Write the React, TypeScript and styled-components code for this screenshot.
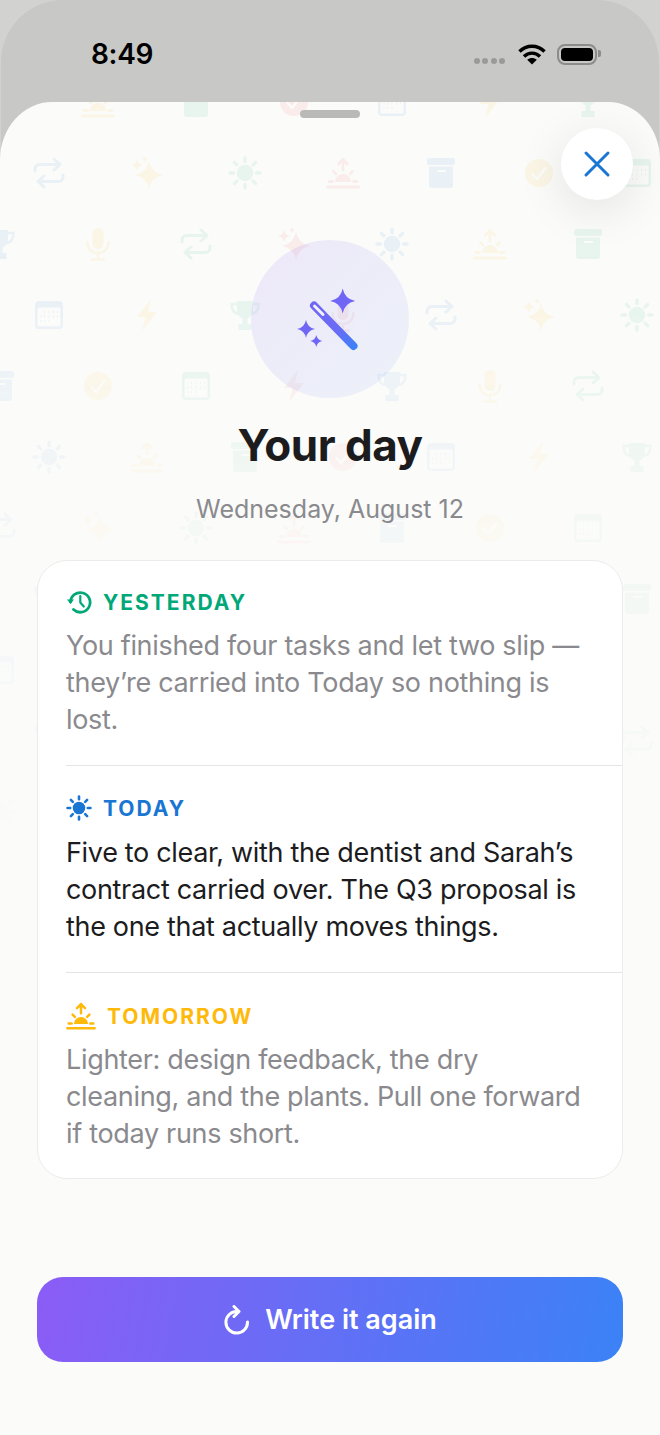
import React from 'react';
import styled, { createGlobalStyle } from 'styled-components';

const GlobalStyle = createGlobalStyle`
  html, body {
    margin: 0;
    padding: 0;
    background: #d2d2d1;
  }
  * {
    box-sizing: border-box;
  }
`;

type IconProps = { size?: number };

const starPath = (cx: number, cy: number, r: number) => {
  const k = r * 0.16;
  return `M${cx} ${cy - r}Q${cx + k} ${cy - k} ${cx + r} ${cy}Q${cx + k} ${cy + k} ${cx} ${cy + r}Q${cx - k} ${cy + k} ${cx - r} ${cy}Q${cx - k} ${cy - k} ${cx} ${cy - r}Z`;
};

const TrophyIcon = ({ size = 34 }: IconProps) => (
  <svg width={size} height={size} viewBox="0 0 34 34" fill="currentColor">
    <path d="M9 3h16v9c0 5-3.5 8.5-8 8.5S9 17 9 12V3z" />
    <path d="M9 6H3.5c0 6 2 9 6.5 10M25 6h5.5c0 6-2 9-6.5 10" fill="none" stroke="currentColor" strokeWidth="2.4" />
    <path d="M14.5 19h5v7h-5zM10.5 26h13v6h-13z" />
  </svg>
);

const MicIcon = ({ size = 34 }: IconProps) => (
  <svg width={size} height={size} viewBox="0 0 34 34" fill="currentColor">
    <rect x="11.5" y="1" width="11" height="21" rx="5.5" />
    <path d="M6.5 15c0 7 4.5 11 10.5 11s10.5-4 10.5-11M17 26v6M11 32.5h12" fill="none" stroke="currentColor" strokeWidth="2.4" strokeLinecap="round" />
  </svg>
);

const RepeatIcon = ({ size = 34 }: IconProps) => (
  <svg width={size} height={size} viewBox="0 0 34 34" fill="none" stroke="currentColor" strokeWidth="3" strokeLinecap="round" strokeLinejoin="round">
    <path d="M3 15v-2c0-2.5 2-4.5 4.5-4.5H28M22 3l6 5.5-6 5.5" />
    <path d="M31 19v2c0 2.5-2 4.5-4.5 4.5H6M12 20l-6 5.5 6 5.5" />
  </svg>
);

const SparkleIcon = ({ size = 34 }: IconProps) => (
  <svg width={size} height={size} viewBox="0 0 34 34" fill="currentColor">
    <path d={starPath(19, 19, 14)} />
    <path d={starPath(7, 9, 6)} />
    <path d={starPath(15, 3, 3)} />
  </svg>
);

const SunIcon = ({ size = 34 }: IconProps) => (
  <svg width={size} height={size} viewBox="0 0 34 34" fill="currentColor">
    <circle cx="17" cy="17" r="8.2" />
    <path
      d="M17 2v3.500M17 28.500V32M2 17h3.500M28.500 17H32M6.400 6.400l2.500 2.500M25.100 25.100l2.500 2.500M6.400 27.600l2.500-2.500M25.100 8.900l2.500-2.500"
      fill="none"
      stroke="currentColor"
      strokeWidth="3.4"
      strokeLinecap="round"
    />
  </svg>
);

const SunriseIcon = ({ size = 34 }: IconProps) => (
  <svg width={size} height={size} viewBox="0 0 34 34" fill="currentColor">
    <path d="M9 26a8 8 0 0 1 16 0z" />
    <path
      d="M1.500 31h31M3 25.500h3.500M27.500 25.500H31M7.500 15.500l2.500 2.500M26.500 15.500L24 18M17 14V3.500M12.500 8L17 3.500 21.500 8"
      fill="none"
      stroke="currentColor"
      strokeWidth="2.8"
      strokeLinecap="round"
      strokeLinejoin="round"
    />
  </svg>
);

const ArchiveIcon = ({ size = 34 }: IconProps) => (
  <svg width={size} height={size} viewBox="0 0 34 34" fill="currentColor">
    <rect x="3" y="2" width="28" height="7" rx="2" />
    <path d="M5 10.500h24V29a3 3 0 0 1-3 3H8a3 3 0 0 1-3-3z" />
    <rect x="13" y="14" width="9" height="2" fill="#fff" />
  </svg>
);

const CheckIcon = ({ size = 34 }: IconProps) => (
  <svg width={size} height={size} viewBox="0 0 34 34" fill="currentColor">
    <circle cx="17" cy="17" r="14" />
    <path d="M10.500 18l4.500 5 8.500-11" fill="none" stroke="#fff" strokeWidth="2.4" strokeLinecap="round" strokeLinejoin="round" />
  </svg>
);

const CalendarIcon = ({ size = 34 }: IconProps) => (
  <svg width={size} height={size} viewBox="0 0 34 34">
    <rect x="3" y="3" width="28" height="28" rx="4" fill="currentColor" />
    <rect x="5.500" y="9.500" width="23" height="19" rx="1.5" fill="#fff" />
    <path
      d="M12 14h1M16.500 14h1M21 14h1M25 14h1M8.500 18.500h1M12 18.500h1M16.500 18.500h1M21 18.500h1M25 18.500h1M8.500 23h1M12 23h1M16.500 23h1"
      stroke="currentColor"
      strokeWidth="2"
    />
  </svg>
);

const BoltIcon = ({ size = 34 }: IconProps) => (
  <svg width={size} height={size} viewBox="0 0 34 34" fill="currentColor">
    <path d="M21 1L7 19h8.500L12 33l15-19h-9z" />
  </svg>
);

const HistoryIcon = () => (
  <svg width="26" height="26" viewBox="0 0 26 26" fill="none" stroke="currentColor" strokeWidth="2.8" strokeLinecap="round" strokeLinejoin="round">
    <path d="M4.500 13a9.800 9.800 0 1 1 3 7.500" />
    <path d="M14.300 7v6.500l3.500 4" strokeWidth="2.2" />
    <path d="M1 10.500h7L4.500 15z" fill="currentColor" stroke="none" />
  </svg>
);

const WandIcon = () => (
  <svg width="80" height="80" viewBox="0 0 80 80">
    <defs>
      <linearGradient id="wand" gradientUnits="userSpaceOnUse" x1="25" y1="25" x2="66" y2="68">
        <stop offset="0" stopColor="#6f66f6" />
        <stop offset="0.6" stopColor="#6a6cf6" />
        <stop offset="1" stopColor="#3b82f6" />
      </linearGradient>
    </defs>
    <path d="M24 26.500L63.500 67" stroke="url(#wand)" strokeWidth="8" strokeLinecap="round" />
    <path d="M24.500 27L33 35.500" stroke="#f3f1fb" strokeWidth="3" strokeLinecap="round" />
    <path d={starPath(52.7, 22, 12.5)} fill="#6f66f6" />
    <path d={starPath(16, 50, 9)} fill="#6f66f6" />
    <path d={starPath(26.3, 62, 6)} fill="#6f66f6" />
  </svg>
);

const RetryIcon = () => (
  <svg width="26" height="30" viewBox="0 0 26 30" fill="none" stroke="#fff" strokeWidth="3" strokeLinecap="round" strokeLinejoin="round">
    <path d="M14 6.500A10.800 10.800 0 1 0 24.500 17" />
    <path d="M11 1.500l5 5-5 5" />
  </svg>
);

const CloseIcon = () => (
  <svg width="28" height="28" viewBox="0 0 28 28" fill="none" stroke="#1976d2" strokeWidth="3" strokeLinecap="round">
    <path d="M3 3l22 22M25 3L3 25" />
  </svg>
);

const WifiIcon = () => (
  <svg width="28" height="21" viewBox="0 0 28 21" fill="none" stroke="#000" strokeWidth="3.4">
    <path d="M1.500 7.500C8.500 0.500 19.500 0.500 26.500 7.500" />
    <path d="M6 12.500c4.500-4.500 11.500-4.500 16 0" />
    <path d="M14 20.500l-4.800-4.800c2.800-2.200 6.800-2.200 9.600 0z" fill="#000" stroke="none" />
  </svg>
);

const PATTERN_ICONS = [
  TrophyIcon,
  MicIcon,
  RepeatIcon,
  SparkleIcon,
  SunIcon,
  SunriseIcon,
  ArchiveIcon,
  CheckIcon,
  CalendarIcon,
  BoltIcon,
];
const PATTERN_COLORS = ['#1976d2', '#ffb300', '#00a878', '#e53e3e'];
const patternRows = Array.from({ length: 11 }, (_, row) => row);
const patternCols = Array.from({ length: 8 }, (_, col) => col);

const Page = styled.div`
  width: 660px;
  height: 1435px;
  overflow: hidden;
  background: #d2d2d1;
  font-family: Inter, 'Liberation Sans', sans-serif;
`;

const Backdrop = styled.div`
  height: 100%;
  margin: 0 1px;
  display: flex;
  flex-direction: column;
  background: #c8c8c6;
  border-radius: 62px 62px 0 0;
`;

const StatusBar = styled.div`
  height: 102px;
  flex-shrink: 0;
  display: flex;
  align-items: flex-start;
  justify-content: space-between;
  padding: 36px 62px 0 90px;
`;

const Clock = styled.div`
  font-size: 28px;
  line-height: 36px;
  font-weight: 600;
  letter-spacing: -0.3px;
  color: #000;
`;

const StatusIcons = styled.div`
  display: flex;
  align-items: center;
  height: 36px;
`;

const SignalDots = styled.div`
  display: flex;
  gap: 2.5px;
  margin: 14px 13px 0 0;
`;

const SignalDot = styled.span`
  width: 6px;
  height: 6px;
  border-radius: 50%;
  background: #9a9a99;
`;

const Battery = styled.div`
  position: relative;
  width: 40px;
  height: 21px;
  margin-left: 11px;
  padding: 2px;
  border: 2px solid #8c8c8b;
  border-radius: 8px;
`;

const BatteryFill = styled.div`
  height: 100%;
  background: #000;
  border-radius: 4px;
`;

const BatteryNub = styled.span`
  position: absolute;
  right: -6px;
  top: 4px;
  width: 3px;
  height: 7px;
  background: #8c8c8b;
  border-radius: 0 2px 2px 0;
`;

const Sheet = styled.div`
  position: relative;
  flex: 1;
  margin: 0 -1px;
  padding: 8px 37px 0;
  display: flex;
  flex-direction: column;
  align-items: center;
  overflow: hidden;
  background: #fbfbf9;
  border-radius: 52px 52px 0 0 / 58px 58px 0 0;
`;

const Pattern = styled.div`
  position: absolute;
  top: -36px;
  left: 0;
  right: 0;
  opacity: 0.075;
  -webkit-mask-image: linear-gradient(#000 0, #000 30%, rgba(0, 0, 0, 0.4) 58%, rgba(0, 0, 0, 0.3) 85%, transparent 100%);
  mask-image: linear-gradient(#000 0, #000 30%, rgba(0, 0, 0, 0.4) 58%, rgba(0, 0, 0, 0.3) 85%, transparent 100%);
`;

const PatternRow = styled.div<{ $even: boolean }>`
  display: flex;
  height: 71px;
  margin-left: ${({ $even }) => ($even ? '-49px' : '0')};
`;

const PatternCell = styled.div<{ $color: string }>`
  flex: 0 0 98px;
  display: flex;
  align-items: center;
  justify-content: center;
  color: ${({ $color }) => $color};
`;

const Handle = styled.div`
  position: relative;
  width: 60px;
  height: 8px;
  border-radius: 4px;
  background: #b9b9b8;
`;

const CloseButton = styled.button`
  position: absolute;
  top: 26px;
  right: 27px;
  width: 72px;
  height: 72px;
  padding: 0;
  display: flex;
  align-items: center;
  justify-content: center;
  border: none;
  border-radius: 50%;
  background: #fff;
  box-shadow: 0 10px 48px rgba(0, 0, 0, 0.1);
`;

const HeroCircle = styled.div`
  position: relative;
  width: 158px;
  height: 158px;
  margin-top: 122px;
  display: flex;
  align-items: center;
  justify-content: center;
  border-radius: 50%;
  background: linear-gradient(135deg, rgba(139, 92, 246, 0.12), rgba(59, 130, 246, 0.08));
`;

const Title = styled.h1`
  position: relative;
  margin: 20px 0 0;
  font-size: 44px;
  line-height: 54px;
  font-weight: 700;
  letter-spacing: -0.5px;
  color: #1c1c1e;
`;

const DateLine = styled.div`
  position: relative;
  margin-top: 21px;
  font-size: 25px;
  line-height: 32px;
  color: #8a8a8e;
`;

const Card = styled.div`
  position: relative;
  width: 100%;
  margin-top: 35px;
  background: #fff;
  border: 1px solid #ececec;
  border-radius: 30px;
  overflow: hidden;
`;

const Section = styled.div<{ $top: number; $last?: boolean }>`
  margin-left: 28px;
  padding: ${({ $top }) => $top}px 30px ${({ $last }) => ($last ? '26px' : '27px')} 0;
  border-bottom: ${({ $last }) => ($last ? 'none' : '1px solid #e4e4e4')};
`;

const Label = styled.div<{ $color: string }>`
  display: flex;
  align-items: center;
  gap: 11px;
  height: 26px;
  font-size: 21px;
  font-weight: 700;
  letter-spacing: 2px;
  color: ${({ $color }) => $color};
`;

const Body = styled.p<{ $strong?: boolean }>`
  margin: ${({ $strong }) => ($strong ? '13px' : '12px')} 0 0;
  font-size: 27px;
  line-height: 37px;
  letter-spacing: -0.32px;
  color: ${({ $strong }) => ($strong ? '#1c1c1e' : '#8a8a8e')};
`;

const PrimaryButton = styled.button`
  position: relative;
  width: 100%;
  height: 85px;
  margin-top: 98px;
  display: flex;
  align-items: center;
  justify-content: center;
  gap: 16px;
  border: none;
  border-radius: 26px;
  background: linear-gradient(100deg, #8b5cf6, #3b82f6);
  color: #fff;
  font-family: inherit;
  font-size: 27px;
  font-weight: 600;
`;

const App = () => (
  <Page>
    <GlobalStyle />
    <Backdrop>
      <StatusBar>
        <Clock>8:49</Clock>
        <StatusIcons>
          <SignalDots>
            <SignalDot />
            <SignalDot />
            <SignalDot />
            <SignalDot />
          </SignalDots>
          <WifiIcon />
          <Battery>
            <BatteryFill />
            <BatteryNub />
          </Battery>
        </StatusIcons>
      </StatusBar>
      <Sheet>
        <Pattern>
          {patternRows.map((row) => (
            <PatternRow key={row} $even={row % 2 === 0}>
              {patternCols.map((col) => {
                const Icon = PATTERN_ICONS[(104 - 2 * row + col) % 10];
                return (
                  <PatternCell key={col} $color={PATTERN_COLORS[col % 4]}>
                    <Icon />
                  </PatternCell>
                );
              })}
            </PatternRow>
          ))}
        </Pattern>
        <Handle />
        <CloseButton aria-label="Close">
          <CloseIcon />
        </CloseButton>
        <HeroCircle>
          <WandIcon />
        </HeroCircle>
        <Title>Your day</Title>
        <DateLine>Wednesday, August 12</DateLine>
        <Card>
          <Section $top={28}>
            <Label $color="#00a878">
              <HistoryIcon />
              YESTERDAY
            </Label>
            <Body>You finished four tasks and let two slip — they’re carried into Today so nothing is lost.</Body>
          </Section>
          <Section $top={29}>
            <Label $color="#1976d2">
              <SunIcon size={26} />
              TODAY
            </Label>
            <Body $strong>
              Five to clear, with the dentist and Sarah’s contract carried over. The Q3 proposal is the one that actually moves things.
            </Body>
          </Section>
          <Section $top={30} $last>
            <Label $color="#ffb90a">
              <SunriseIcon size={30} />
              TOMORROW
            </Label>
            <Body>Lighter: design feedback, the dry cleaning, and the plants. Pull one forward if today runs short.</Body>
          </Section>
        </Card>
        <PrimaryButton>
          <RetryIcon />
          Write it again
        </PrimaryButton>
      </Sheet>
    </Backdrop>
  </Page>
);

export default App;
